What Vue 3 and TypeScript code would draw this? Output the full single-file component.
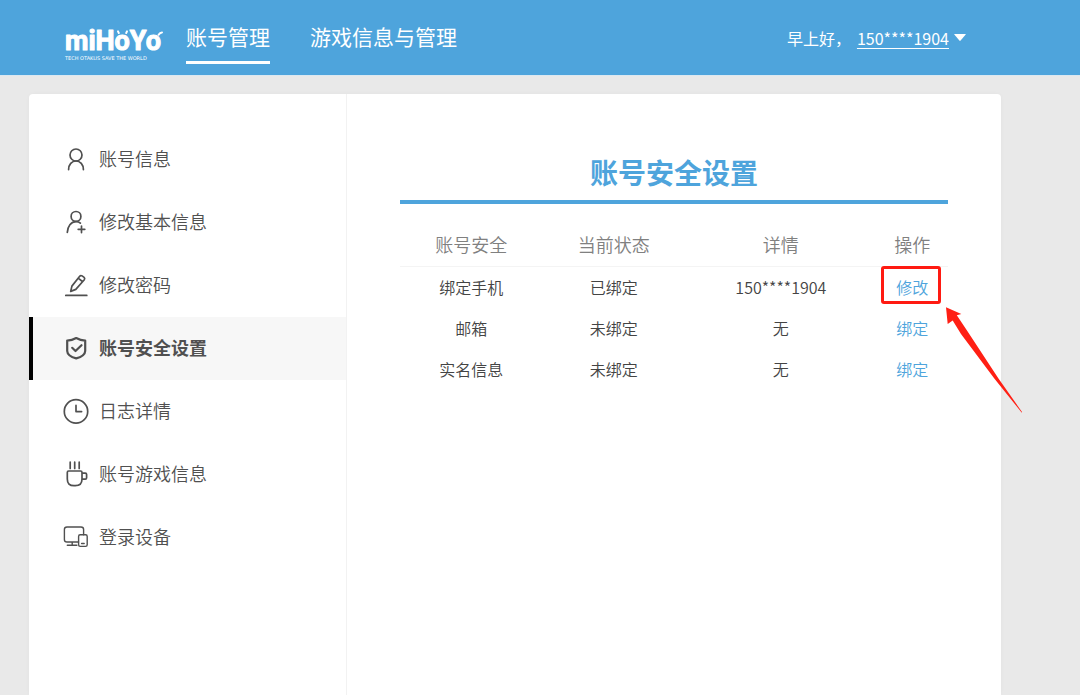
<script setup lang="ts">
import { ref } from 'vue'

type IconName = 'user' | 'userAdd' | 'edit' | 'shield' | 'clock' | 'cup' | 'device'

interface MenuItem {
  icon: IconName
  label: string
}

interface SecurityRow {
  name: string
  status: string
  detail: string
  action: string
  marked?: boolean
}

const tabs: string[] = ['账号管理', '游戏信息与管理']
const activeTab = ref(0)

const menu: MenuItem[] = [
  { icon: 'user', label: '账号信息' },
  { icon: 'userAdd', label: '修改基本信息' },
  { icon: 'edit', label: '修改密码' },
  { icon: 'shield', label: '账号安全设置' },
  { icon: 'clock', label: '日志详情' },
  { icon: 'cup', label: '账号游戏信息' },
  { icon: 'device', label: '登录设备' },
]
const activeMenu = ref(3)

const columns: string[] = ['账号安全', '当前状态', '详情', '操作']
const rows: SecurityRow[] = [
  { name: '绑定手机', status: '已绑定', detail: '150****1904', action: '修改', marked: true },
  { name: '邮箱', status: '未绑定', detail: '无', action: '绑定' },
  { name: '实名信息', status: '未绑定', detail: '无', action: '绑定' },
]
</script>

<template>
  <div class="page">
    <header class="header">
      <a class="logo" href="#" aria-label="miHoYo">
        <svg width="100" height="40" viewBox="0 0 100 40">
          <text class="logo-name" x="1" y="28">miHoYo</text>
          <path class="logo-ears" d="M54 9.4l.8 1.6M63 9.4l-.8 1.6M98 10.4q-2 .2-3.4 2.4" />
          <text class="logo-motto" x="1" y="38">TECH OTAKUS SAVE THE WORLD</text>
        </svg>
      </a>
      <nav class="tabs">
        <a
          v-for="(tab, i) in tabs"
          :key="tab"
          href="#"
          class="tab"
          :class="{ active: i === activeTab }"
          @click.prevent="activeTab = i"
        >{{ tab }}</a>
      </nav>
      <div class="account">
        <span>早上好，</span>
        <button type="button" class="user">
          <span class="phone">150****1904</span>
          <svg width="12" height="7" viewBox="0 0 12 7"><path d="M0.5 0h11Q12 0 11.7 .6L6.6 6.6Q6 7.2 5.4 6.6L.3 .6Q0 0 .5 0z" /></svg>
        </button>
      </div>
    </header>

    <main class="card">
      <nav class="sidebar">
        <a
          v-for="(item, i) in menu"
          :key="item.label"
          href="#"
          class="item"
          :class="{ active: i === activeMenu }"
          @click.prevent="activeMenu = i"
        >
          <svg class="icon" width="28" height="28" viewBox="0 0 28 28">
            <g v-if="item.icon === 'user'">
              <circle cx="14" cy="9" r="6" />
              <path d="M6.6 23.6C6.6 18.5 9.8 15 14 15s7.4 3.5 7.4 8.6" />
            </g>
            <g v-else-if="item.icon === 'userAdd'">
              <circle cx="14" cy="7.4" r="4.9" />
              <path d="M5.3 23.4C5.6 17.4 9 12.6 14 12.6c2 0 3.4.6 4.4 1.6M19.5 17v6.6M16.2 20.3h6.6" />
            </g>
            <g v-else-if="item.icon === 'edit'">
              <path d="M3.8 23.4H24.8" />
              <path d="M8.7 19.4l1.2-5.3 7.8-9.8q1-1.3 2.4-.4l2 1.5q1.1 1 .2 2.3l-8.5 9.7zM16.2 6.2l4.2 3.3" />
            </g>
            <g v-else-if="item.icon === 'shield'" class="heavy">
              <path d="M14.2 3Q18.5 5.3 23.2 5.6V16Q23 21 14.2 23.4Q5.4 21 5.2 16V5.6Q10 5.3 14.2 3z" />
              <path d="M10.2 12.8l3.3 3.2 6-5.8" />
            </g>
            <g v-else-if="item.icon === 'clock'">
              <circle cx="14" cy="13.4" r="11.7" />
              <path d="M14 7.4v6.2h5.6" />
            </g>
            <g v-else-if="item.icon === 'cup'">
              <path d="M8.2 1.2v6.2M12.7 1.2v6.2M17.2 1.2v6.2" />
              <path d="M6.6 10h12q1.4 0 1.4 1.4V18q0 6.7-6.7 6.7h-1.3q-6.7 0-6.7-6.7v-6.6q0-1.4 1.3-1.4zM20 12.2h3.2q1.4 0 1.4 1.4v3.2q0 1.4-1.4 1.4H20" />
            </g>
            <g v-else class="fine">
              <path d="M16.5 18H5q-2.6 0-2.6-2.6V5.6Q2.4 3 5 3h14q2.6 0 2.6 2.6v5.2M10.2 18v3.2M5.3 21.2h9.6" />
              <rect x="16.6" y="10.8" width="8.6" height="11.6" rx="1.6" />
              <path d="M19.6 19.5h2.6" />
            </g>
          </svg>
          <span class="label">{{ item.label }}</span>
        </a>
      </nav>

      <section class="content">
        <h1 class="title">账号安全设置</h1>
        <table class="table">
          <thead>
            <tr>
              <th v-for="column in columns" :key="column" scope="col">{{ column }}</th>
            </tr>
          </thead>
          <tbody>
            <tr v-for="row in rows" :key="row.name">
              <td>{{ row.name }}</td>
              <td>{{ row.status }}</td>
              <td>{{ row.detail }}</td>
              <td class="action-cell">
                <a class="action" href="#">{{ row.action }}</a>
                <template v-if="row.marked">
                  <span class="frame"></span>
                  <svg class="arrow" width="78" height="108" viewBox="0 0 78 108">
                    <path d="M1 1.3L16.3 8 11.8 9.2 22.8 25.7 53.3 72.3 77.2 106.3 76.6 106.6 49.7 73 16 28 7.7 14.4 2.7 18z" />
                  </svg>
                </template>
              </td>
            </tr>
          </tbody>
        </table>
      </section>
    </main>
  </div>
</template>

<style>
body {
  margin: 0;
  background: #e9e9e9;
}
</style>

<style scoped>
.page {
  display: flex;
  flex-direction: column;
  min-height: 100vh;
  font-family: "Noto Sans CJK SC", "Microsoft YaHei", sans-serif;
  font-size: 16px;
  color: #444;
}

a {
  color: inherit;
  text-decoration: none;
}

.header {
  display: flex;
  align-items: center;
  box-sizing: border-box;
  height: 76px;
  padding: 0 114px 0 64px;
  border-bottom: 1px solid #dbe8f1;
  background: #4ea4dc;
  color: #fff;
}

.logo {
  display: flex;
  margin-top: 8px;
}

.logo svg {
  overflow: visible;
}

.logo-name {
  font: bold 27px Roboto, "Liberation Sans", sans-serif;
  fill: #fff;
  stroke: #fff;
  stroke-width: 1;
  stroke-linejoin: round;
}

.logo-ears {
  fill: none;
  stroke: #fff;
  stroke-width: 2;
  stroke-linecap: round;
}

.logo-motto {
  font: 5px "DejaVu Sans", sans-serif;
  fill: #fff;
}

.tabs {
  display: flex;
  gap: 40px;
  margin-left: 22px;
}

.tab {
  padding: 10px 0 11px;
  border-bottom: 3px solid transparent;
  font-size: 21px;
  line-height: 28px;
}

.tab.active {
  border-color: #fff;
}

.account {
  display: flex;
  align-items: center;
  gap: 6px;
  margin-left: auto;
  line-height: 24px;
}

.user {
  display: flex;
  align-items: center;
  gap: 5px;
  padding: 0;
  border: 0;
  background: none;
  color: inherit;
  font: inherit;
  line-height: 24px;
  cursor: pointer;
}

.user svg {
  fill: #fff;
}

.phone {
  text-decoration: underline;
  text-underline-offset: 3px;
}

.card {
  display: flex;
  flex: 1;
  margin: 18px 79px 0 29px;
  border-radius: 4px 4px 0 0;
  background: #fff;
  box-shadow: 0 0 4px rgba(0, 0, 0, 0.03);
}

.sidebar {
  flex: 0 0 317px;
  padding-top: 34px;
  border-right: 1px solid #f2f2f2;
}

.item {
  display: flex;
  align-items: center;
  gap: 9px;
  height: 63px;
  padding-left: 33px;
  font-size: 18px;
  font-weight: 350;
  color: #505050;
}

.item.active {
  background: #f7f7f7;
  box-shadow: inset 4px 0 #000;
  font-weight: bold;
}

.label {
  padding-bottom: 4px;
}

.icon {
  fill: none;
  stroke: #505050;
  stroke-width: 1.7;
  stroke-linecap: round;
  stroke-linejoin: round;
}

.heavy {
  stroke-width: 2.2;
}

.fine {
  stroke-width: 1.4;
}

.content {
  flex: 1;
  padding: 58px 53px;
}

.title {
  margin: 0;
  padding-bottom: 8px;
  border-bottom: 4px solid #4ea4dc;
  color: #4ea4dc;
  font-size: 28px;
  line-height: 40px;
  text-align: center;
}

.table {
  width: 100%;
  margin-top: 20px;
  border-collapse: separate;
  border-spacing: 0;
  table-layout: fixed;
  text-align: center;
}

.table th,
.table td {
  box-sizing: border-box;
  padding: 0 0 2px;
  font-weight: 350;
}

.table th {
  height: 43px;
  border-bottom: 1px solid #f4f4f4;
  color: #808080;
  font-size: 18px;
}

.table th:nth-child(-n + 2) {
  width: 26%;
}

.table th:nth-child(3) {
  width: 35%;
}

.table td {
  height: 41px;
}

.action-cell {
  position: relative;
}

.action {
  color: #4ea4dc;
}

.frame {
  position: absolute;
  top: -1px;
  left: 50%;
  box-sizing: border-box;
  width: 60px;
  height: 38px;
  margin-left: -31px;
  border: 3px solid #ff1a12;
  border-radius: 3px;
  pointer-events: none;
}

.arrow {
  position: absolute;
  top: 39px;
  left: 50%;
  margin-left: 33px;
  fill: #ff1f14;
  pointer-events: none;
}
</style>
